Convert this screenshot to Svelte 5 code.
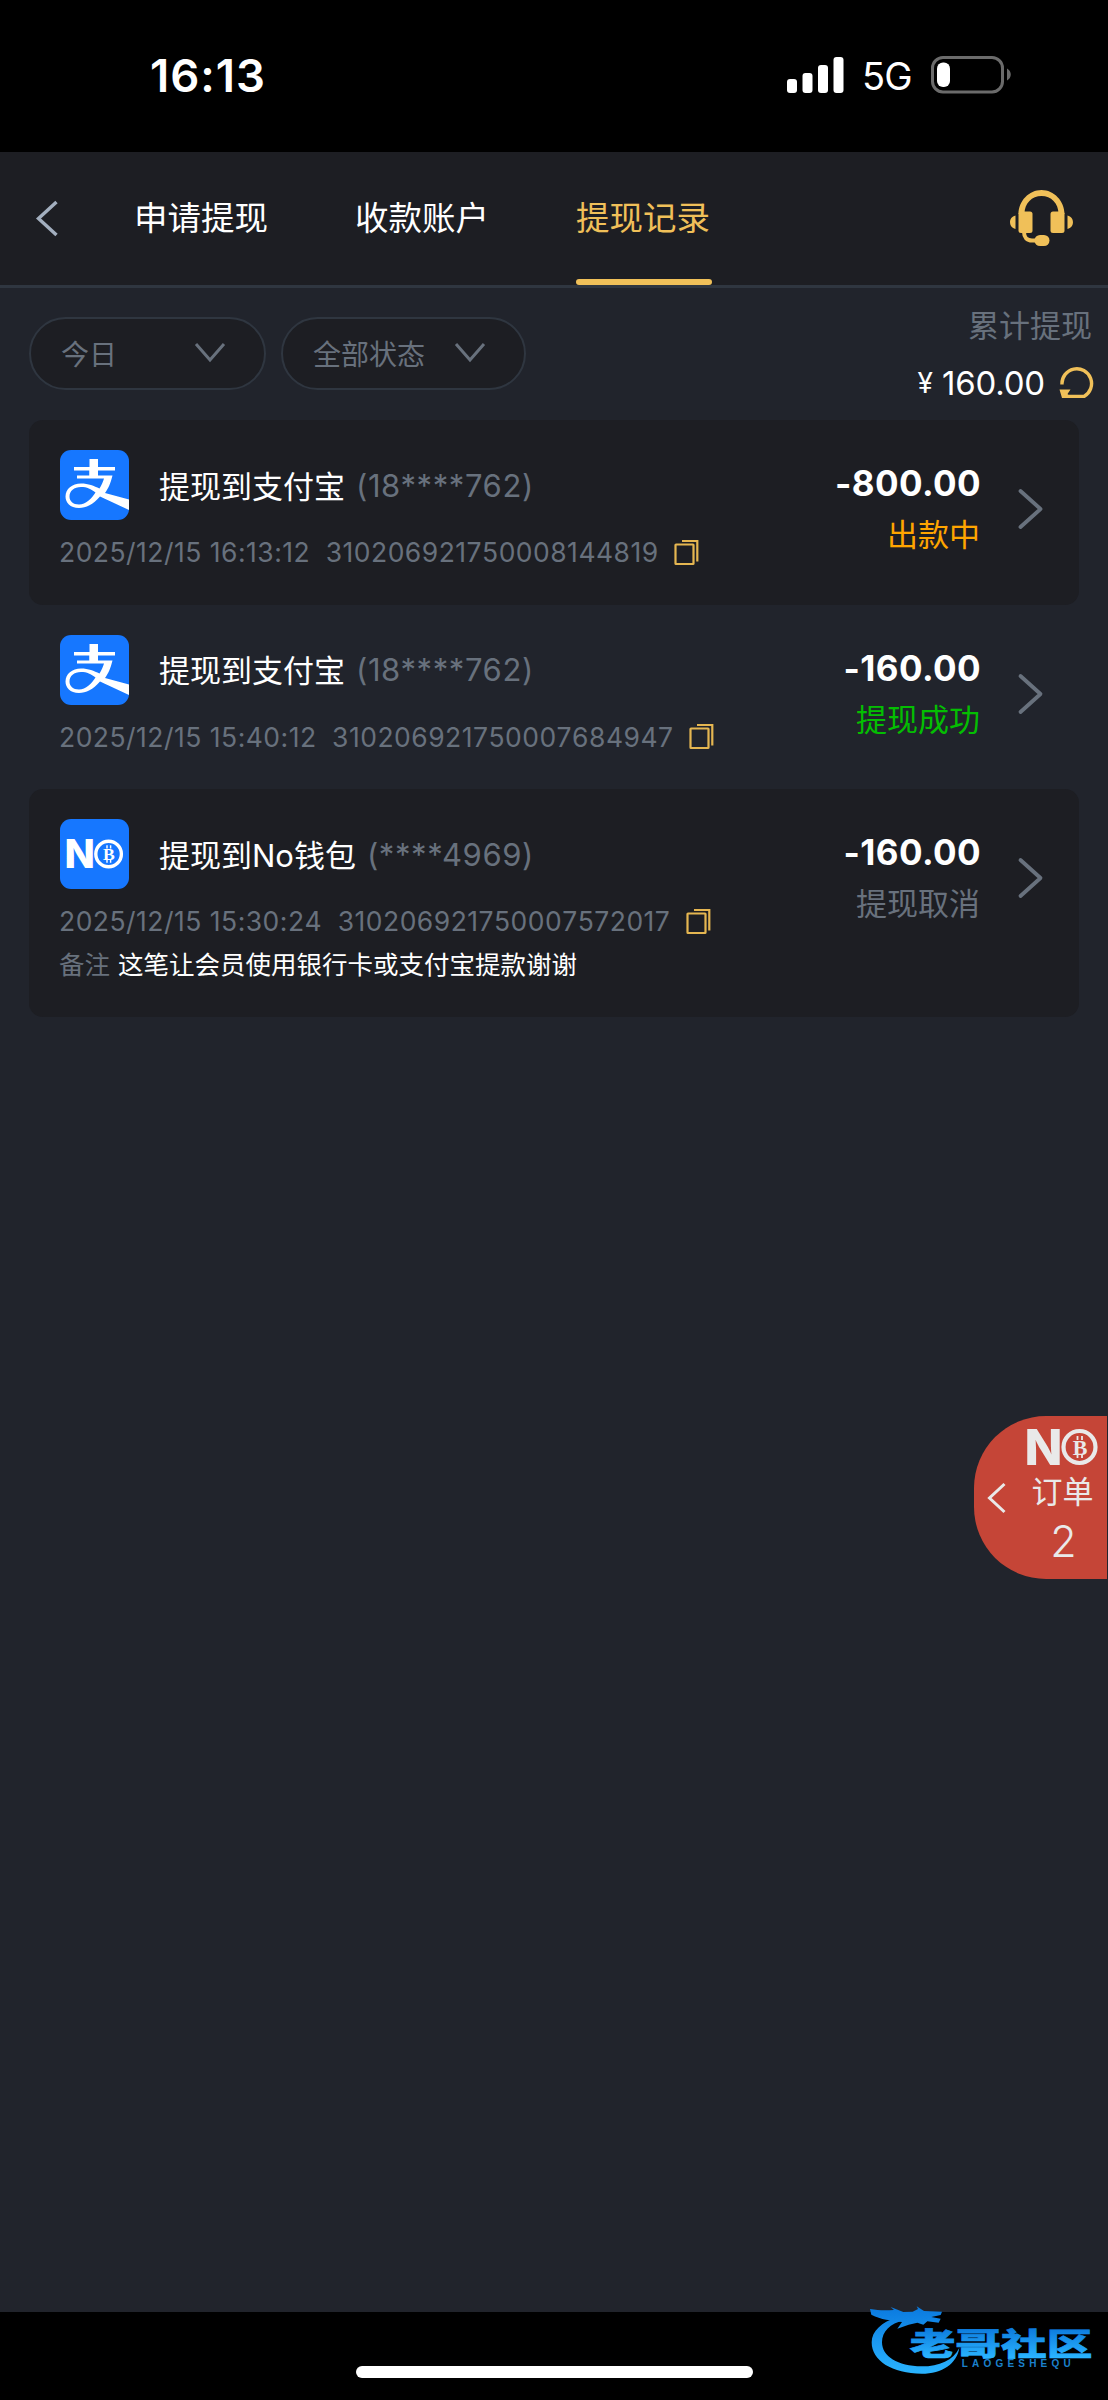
<script lang="ts">
	interface WithdrawRecord {
		icon: 'alipay' | 'no';
		title: string;
		account: string;
		time: string;
		orderNo: string;
		amount: string;
		status: string;
		state: 'pending' | 'success' | 'cancelled';
		remark?: string;
	}

	const tabs = ['申请提现', '收款账户', '提现记录'];
	const filters = ['今日', '全部状态'];
	let activeTab = $state(2);

	const records: WithdrawRecord[] = [
		{
			icon: 'alipay',
			title: '提现到支付宝',
			account: '(18****762)',
			time: '2025/12/15 16:13:12',
			orderNo: '310206921750008144819',
			amount: '-800.00',
			status: '出款中',
			state: 'pending'
		},
		{
			icon: 'alipay',
			title: '提现到支付宝',
			account: '(18****762)',
			time: '2025/12/15 15:40:12',
			orderNo: '310206921750007684947',
			amount: '-160.00',
			status: '提现成功',
			state: 'success'
		},
		{
			icon: 'no',
			title: '提现到No钱包',
			account: '(****4969)',
			time: '2025/12/15 15:30:24',
			orderNo: '310206921750007572017',
			amount: '-160.00',
			status: '提现取消',
			state: 'cancelled',
			remark: '这笔让会员使用银行卡或支付宝提款谢谢'
		}
	];
</script>

{#snippet noLogo()}
	<svg class="no-logo" viewBox="0 0 72 40">
		<text class="no-n" x="-2" y="38" textLength="38" lengthAdjust="spacingAndGlyphs">N</text>
		<circle cx="53" cy="20" r="16" fill="none" stroke="currentColor" stroke-width="4.2" />
		<text class="no-b" x="53.5" y="27.5" text-anchor="middle">B</text>
		<path d="M51 9v4M55.5 9v4M51 27v4M55.5 27v4" stroke="currentColor" stroke-width="1.8" />
	</svg>
{/snippet}

<div class="page">
	<div class="status-bar">
		<span class="clock">16:13</span>
		<div class="status-icons">
			<svg width="57" height="37" viewBox="0 0 57 37" fill="#fff">
				<rect x="0" y="22" width="10" height="14" rx="3" />
				<rect x="15.5" y="16" width="10" height="20" rx="3" />
				<rect x="31" y="8" width="10" height="28" rx="3" />
				<rect x="46.5" y="0" width="10" height="36" rx="3" />
			</svg>
			<span class="network">5G</span>
			<svg width="81" height="38" viewBox="0 0 81 38">
				<rect x="1.5" y="1.5" width="70" height="34.5" rx="10.5" fill="none" stroke="#6b6b6b" stroke-width="3" />
				<rect x="6" y="6.5" width="13" height="24.5" rx="6" fill="#fff" />
				<path d="M76 12.5c5 2.5 5 9.5 0 12z" fill="#6b6b6b" />
			</svg>
		</div>
	</div>

	<header>
		<svg class="back" width="26" height="38" viewBox="0 0 26 38">
			<path d="M22.5 2 4.5 18.5 22.5 35" fill="none" stroke="#a3afbf" stroke-width="3.4" />
		</svg>
		<nav>
			{#each tabs as tab, i}
				<button class="tab" class:active={i === activeTab} onclick={() => (activeTab = i)}>
					<span>{tab}</span>
				</button>
			{/each}
		</nav>
		<svg class="service" width="64" height="58" viewBox="0 0 64 58" fill="#f0c059">
			<path d="M8.5 24C8.5 11 19 0 31.5 0S54.5 11 54.5 24h-6C48.5 13 41 6 31.5 6S14.5 13 14.5 24z" />
			<rect x="8.5" y="21.5" width="14" height="21.5" rx="2.5" />
			<rect x="40.5" y="21.5" width="14" height="21.5" rx="2.5" />
			<path d="M5.5 25.5C-1.8 27-1.8 37.5 5.5 39zM57.5 25.5c7.3 1.5 7.3 12 0 13.5z" />
			<path d="M14 42c0 5.500 3 8.500 8 8.500h6" fill="none" stroke="#f0c059" stroke-width="4" />
			<rect x="24.5" y="45" width="15" height="11" rx="5.5" />
		</svg>
	</header>

	<main>
		<div class="toolbar">
			{#each filters as filter, i}
				<button class="filter" class:wide={i === 1}>
					{filter}
					<svg width="32" height="22" viewBox="0 0 32 22">
						<path d="M2 2 16 18 30 2" fill="none" stroke="#68717d" stroke-width="3" />
					</svg>
				</button>
			{/each}
			<div class="total">
				<div class="total-label">累计提现</div>
				<div class="total-value">
					<span class="yen">¥</span><span class="sum">160.00</span>
					<svg width="35" height="31" viewBox="0 0 35 31">
						<path d="M3 17.500A14.800 14.800 0 1 1 25 29.500H9" fill="none" stroke="#f0c059" stroke-width="3.4" />
						<path d="M.5 22.500H11.500L8.500 27 12 31H3z" fill="#f0c059" />
					</svg>
				</div>
			</div>
		</div>

		{#each records as r}
			<div class="record">
				<div class="info">
					<div class="title-row">
						<span class="pay-icon">
							{#if r.icon === 'alipay'}
								<svg width="69" height="70" viewBox="0 0 69 70" fill="#fff">
									<path d="M29.5 9h8.500v18.500h-8.500z" />
									<path
										fill-rule="evenodd"
										d="M14 17h41v3.500H38V25.500h14.500c-2 8-4 12.500-7.500 17.500L69 49.500V60L40 46.500C33 54.500 26 58 19 58 10 58 5.500 52.500 5.500 46.500 5.500 39 12 33.500 21 33.500c7.500 0 13 2.500 18.500 5 2-3.500 3.500-6.500 4.500-10H17v-3h12.500v-5H14zM35.500 42.500C31 39 27 37 21 37 14 37 9.500 41 9.500 46.500c0 4.500 3.500 8 9.500 8 7 0 12.500-6 16.500-12z"
									/>
								</svg>
							{:else}
								{@render noLogo()}
							{/if}
						</span>
						<span class="title">{r.title}</span>
						<span class="account">{r.account}</span>
					</div>
					<div class="meta">
						<span>{r.time}</span>
						<span>{r.orderNo}</span>
						<svg width="25" height="27" viewBox="0 0 25 27" fill="none" stroke="#e5b651" stroke-width="2.2">
							<rect x="1.5" y="5.5" width="18" height="19.5" rx=".5" />
							<path d="M8 2h15.3v20.5" />
						</svg>
					</div>
					{#if r.remark}
						<div class="remark"><span>备注</span>{r.remark}</div>
					{/if}
				</div>
				<div class="result">
					<div class="amount">{r.amount}</div>
					<div class="state {r.state}">{r.status}</div>
				</div>
				<svg class="more" width="28" height="42" viewBox="0 0 28 42">
					<path d="M3.5 3 23.5 21 3.5 39" fill="none" stroke="#68717d" stroke-width="3.8" stroke-linecap="round" stroke-linejoin="round" />
				</svg>
			</div>
		{/each}
	</main>

	<aside class="orders">
		<svg width="20" height="32" viewBox="0 0 20 32">
			<path d="M17.5 2 2.5 16l15 14" fill="none" stroke="#e9e9e9" stroke-width="3" />
		</svg>
		<div class="orders-body">
			{@render noLogo()}
			<span class="orders-label">订单</span>
			<span class="orders-count">2</span>
		</div>
	</aside>

	<footer>
		<div class="home-indicator"></div>
	</footer>

	<svg class="watermark" width="236" height="90" viewBox="0 0 708 270">
		<defs>
			<linearGradient id="wm-ring" x1="0" y1="40" x2="0" y2="236" gradientUnits="userSpaceOnUse">
				<stop offset="0" stop-color="#0b7be0" />
				<stop offset="1" stop-color="#2ab4ff" />
			</linearGradient>
			<linearGradient id="wm-text" x1="0" y1="96" x2="0" y2="188" gradientUnits="userSpaceOnUse">
				<stop offset="0" stop-color="#0b78dc" />
				<stop offset="1" stop-color="#2ab4ff" />
			</linearGradient>
		</defs>
		<g fill="url(#wm-ring)">
			<path d="M112 66C65 82 35 108 35 142c0 56 62 94 150 94 62 0 106-30 113-78-18 38-60 56-113 56-72 0-119-30-119-72 0-32 24-56 66-66z" />
			<path d="M30 42c28 5 48 4 72 3l-10-9 38 15 28-1 16-8-4-8 22 14 54 2-4 10-28 6 28 5-6 12-34-4-12 10-18-6-26 6-34 12 14-20c-34-6-62-6-92-22z" />
		</g>
		<text class="wm-cn" x="149" y="179" textLength="548" lengthAdjust="spacingAndGlyphs">老哥社区</text>
		<text class="wm-en" x="305" y="217" textLength="327">LAOGESHEQU</text>
	</svg>
</div>

<style>
	:global(body) {
		margin: 0;
		background: #21242c;
	}

	.page {
		position: relative;
		display: flex;
		flex-direction: column;
		width: 1108px;
		height: 2400px;
		overflow: hidden;
		background: #21242c;
		color: #fff;
		font-family: Inter, 'Noto Sans CJK SC', sans-serif;
	}

	svg {
		display: block;
		flex-shrink: 0;
	}

	button {
		padding: 0;
		border: 0;
		background: none;
		color: inherit;
		font: inherit;
	}

	.status-bar {
		display: flex;
		align-items: center;
		justify-content: space-between;
		box-sizing: border-box;
		height: 152px;
		padding: 0 96px 2px 150px;
		background: #000;
	}

	.clock {
		font-size: 45.5px;
		font-weight: 600;
		letter-spacing: 1px;
	}

	.status-icons {
		display: flex;
		align-items: center;
	}

	.network {
		width: 50px;
		margin: 2px 19px 0 18px;
		font-size: 38px;
		font-weight: 400;
		letter-spacing: -0.8px;
	}

	header {
		display: flex;
		align-items: center;
		box-sizing: border-box;
		height: 136px;
		padding: 0 34px;
		border-bottom: 3px solid #2f3640;
		background: #1d1e23;
	}

	nav {
		display: flex;
		flex: 1;
		gap: 85px;
		height: 100%;
		margin-left: 74px;
	}

	.tab {
		display: flex;
		flex-direction: column;
		width: 136px;
		font-size: 33.5px;
	}

	.tab span {
		display: flex;
		flex: 1;
		align-items: center;
	}

	.tab::after {
		content: '';
		width: 100%;
		height: 6px;
		border-radius: 3px;
	}

	.tab.active {
		color: #f0c059;
	}

	.tab.active::after {
		background: #f0c059;
	}

	main {
		flex: 1;
		padding: 0 29px;
	}

	.toolbar {
		display: flex;
		height: 132px;
		margin-right: -15px;
	}

	.filter {
		display: flex;
		align-items: center;
		justify-content: space-between;
		box-sizing: border-box;
		width: 237px;
		height: 73px;
		margin: 29px 15px 0 0;
		padding: 0 38px 1px 30px;
		border: 2px solid #2f3640;
		border-radius: 37px;
		background: #1d1e23;
		color: #68717d;
		font-size: 28px;
	}

	.filter.wide {
		width: 245px;
	}

	.total {
		flex: 1;
	}

	.total-label {
		margin: 15px 2px 0 0;
		color: #68717d;
		font-size: 31px;
		line-height: 46px;
		text-align: right;
	}

	.total-value {
		display: flex;
		align-items: center;
		justify-content: flex-end;
		height: 68px;
		font-size: 33px;
	}

	.total-value svg {
		margin-top: -2px;
	}

	.yen {
		margin-right: 9px;
		font-size: 28px;
	}

	.sum {
		margin-right: 14px;
		letter-spacing: -0.2px;
	}

	.record {
		display: flex;
		box-sizing: border-box;
		padding: 30px 34px 30.5px 31px;
		border-radius: 14px;
	}

	.record:nth-child(even) {
		background: #1d1e23;
	}

	.info {
		flex: 1;
	}

	.title-row {
		display: flex;
		align-items: center;
		height: 70px;
		font-size: 31px;
	}

	.pay-icon {
		display: flex;
		align-items: center;
		justify-content: center;
		width: 69px;
		height: 70px;
		margin-right: 30px;
		overflow: hidden;
		border-radius: 11px;
		background: #1677ff;
	}

	.title {
		margin-top: -2px;
	}

	.account {
		margin-left: 11px;
		color: #68717d;
		letter-spacing: 0.6px;
	}

	.meta {
		display: flex;
		align-items: center;
		gap: 15.5px;
		height: 54px;
		margin: 5px 0 -5px -1px;
		color: #68717d;
		font-kerning: none;
		font-size: 26.5px;
		letter-spacing: 0.48px;
	}

	.remark {
		height: 43px;
		margin-left: -1px;
		font-size: 25.5px;
		line-height: 44px;
	}

	.remark span {
		margin-right: 8px;
		color: #68717d;
	}

	.result {
		text-align: right;
	}

	.amount {
		height: 52px;
		margin: 7px 0 0;
		font-size: 35px;
		font-weight: 650;
		letter-spacing: 0.4px;
		line-height: 52px;
	}

	.state {
		margin-right: 1px;
		font-size: 31px;
		line-height: 52px;
	}

	.pending {
		color: #ffa500;
	}

	.success {
		color: #04be02;
	}

	.cancelled {
		color: #68717d;
	}

	.more {
		margin: 38px 0 0 36px;
	}

	.no-logo {
		width: 58px;
		height: 32px;
		overflow: visible;
	}

	.no-n {
		fill: currentColor;
		font-size: 50px;
		font-weight: 800;
	}

	.no-b {
		fill: currentColor;
		font-family: 'Liberation Serif', serif;
		font-size: 22px;
		font-weight: 700;
	}

	/* floating shortcut over the list */
	.orders {
		position: absolute;
		top: 1416px;
		right: 1px;
		display: flex;
		align-items: center;
		box-sizing: border-box;
		width: 133px;
		height: 163px;
		padding-left: 13px;
		border-radius: 72px 0 0 72px;
		background: #c54537;
		color: #e9e9e9;
	}

	.orders-body {
		display: flex;
		flex-direction: column;
		align-items: center;
		margin: -4px 0 0 19px;
	}

	.orders-body .no-logo {
		width: 73px;
		height: 40px;
	}

	.orders-label {
		font-size: 31px;
		line-height: 50px;
	}

	.orders-count {
		margin-left: 2px;
		font-size: 43px;
		font-weight: 300;
		line-height: 48px;
	}

	footer {
		display: flex;
		align-items: flex-end;
		justify-content: center;
		box-sizing: border-box;
		height: 88px;
		padding-bottom: 22px;
		background: #000;
	}

	.home-indicator {
		width: 397px;
		height: 12px;
		border-radius: 6px;
		background: #fff;
	}

	.watermark {
		position: absolute;
		top: 2295px;
		left: 860px;
		overflow: visible;
	}

	.wm-cn {
		fill: url(#wm-text);
		stroke: url(#wm-text);
		stroke-width: 2px;
		font-family: 'Noto Sans CJK SC', sans-serif;
		font-size: 92px;
		font-weight: 900;
	}

	.wm-en {
		fill: #1b80cc;
		font-family: 'Liberation Sans', sans-serif;
		font-size: 30px;
		font-weight: 700;
	}
</style>
